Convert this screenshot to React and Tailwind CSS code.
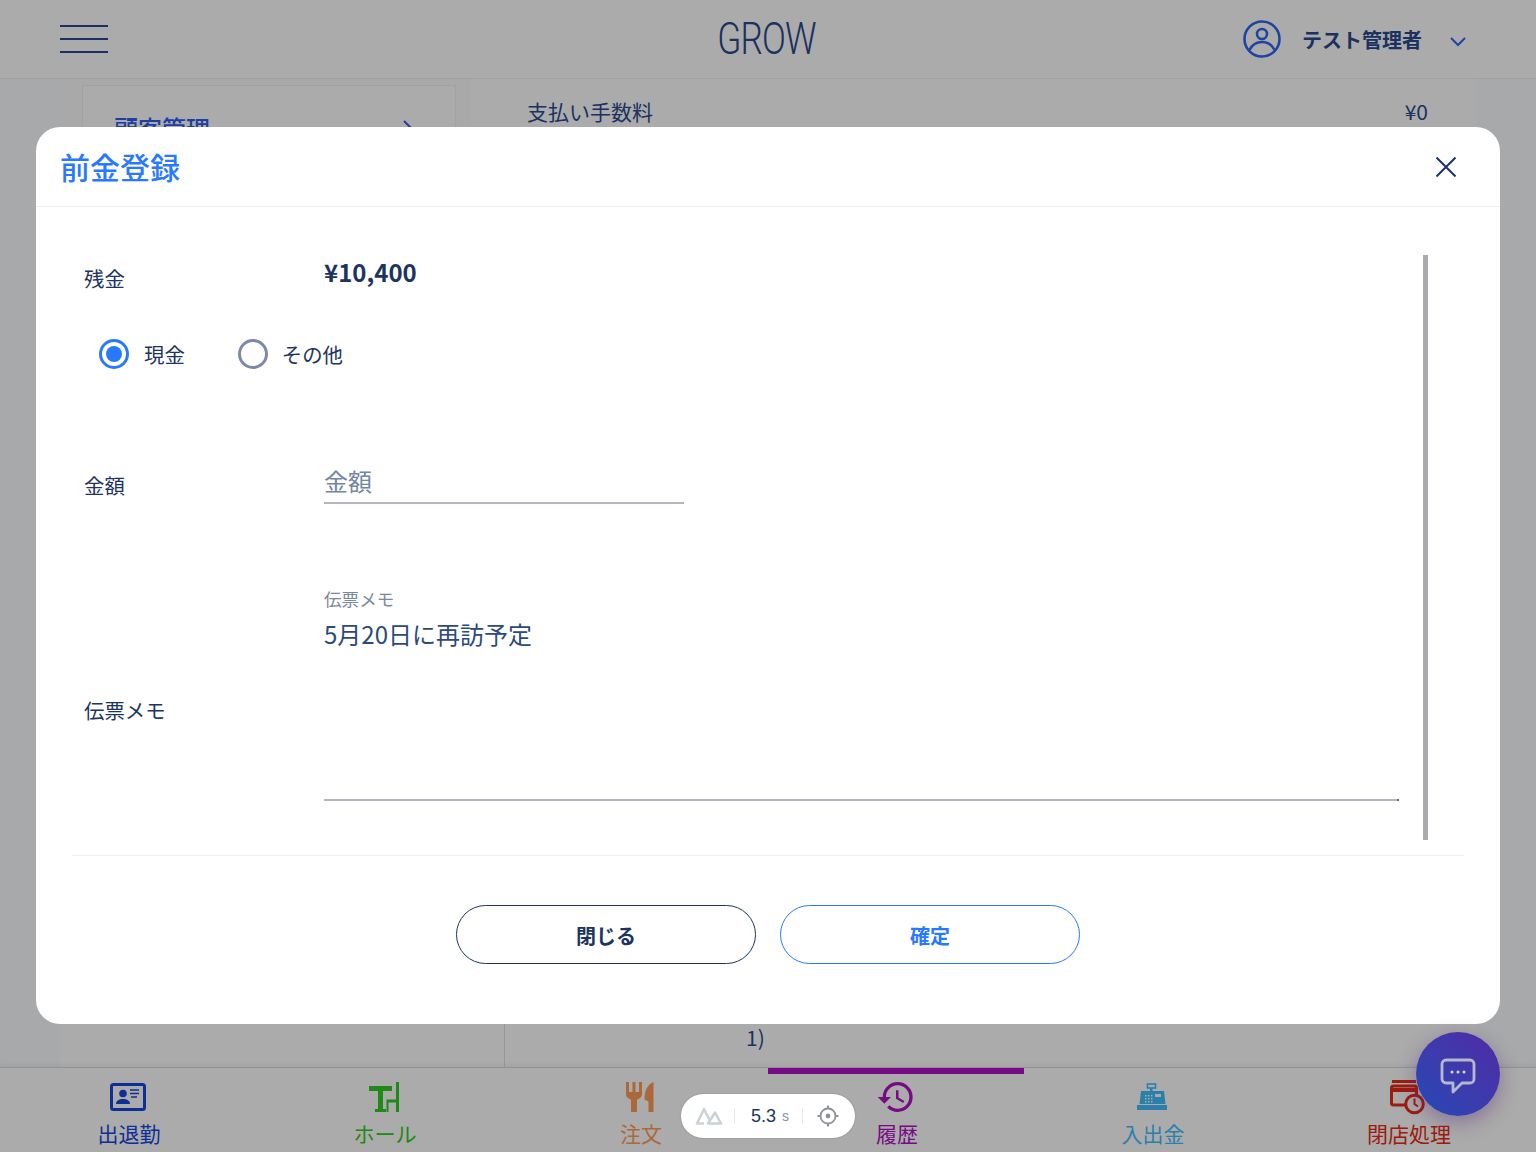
import React from 'react';
import { MdHistory } from 'react-icons/md';

const font = "font-['Noto_Sans_CJK_JP','Noto_Sans',sans-serif]";

function CardIcon() {
  return (
    <svg width="36" height="28" viewBox="0 0 36 28" fill="none">
      <rect x="1.500" y="1.500" width="33" height="25" rx="2" stroke="currentColor" strokeWidth="3" />
      <circle cx="13" cy="10.500" r="3.800" fill="currentColor" />
      <path d="M6 21c0-3.500 3-5 7-5s7 1.500 7 5z" fill="currentColor" />
      <path d="M20 7h9M20 10.500h9M21 14h6" stroke="currentColor" strokeWidth="1.400" />
    </svg>
  );
}
function TableIcon() {
  return (
    <svg width="31" height="30" viewBox="0 0 31 30" fill="currentColor">
      <path d="M0 4h23v5h-9v18h3v3H6v-3h3V9H0z" />
      <path d="M27 0h3v30h-3V20.500H19.500V30H17.500V17.500H27z" />
    </svg>
  );
}
function ForkKnifeIcon() {
  return (
    <svg width="28" height="30" viewBox="0 0 28 30" fill="currentColor">
      <path d="M0 0h3v10h3.500V0h3v10H13V0h3v12c0 3-2.500 5-5 5.500V30H5V17.500C2.500 17 0 15 0 12z" />
      <path d="M27.500 0C22 2 18.500 8 18.500 17.500l4 2V30h5z" />
    </svg>
  );
}
function RegisterIcon() {
  return (
    <svg width="30" height="28" viewBox="0 0 30 28">
      <g fill="currentColor">
        <rect x="0" y="22" width="30" height="5" />
        <path d="M4 8h23l1.500 13H2.500z" />
        <rect x="13" y="5" width="2.500" height="4" />
      </g>
      <rect x="10.500" y="1" width="8" height="4" fill="none" stroke="currentColor" strokeWidth="1.600" />
      <rect x="18" y="11" width="6" height="3" fill="#fff" />
      <g fill="#fff">
        <rect x="8" y="12" width="1.500" height="1.500" /><rect x="11" y="12" width="1.500" height="1.500" /><rect x="14" y="12" width="1.500" height="1.500" />
        <rect x="8" y="15" width="1.500" height="1.500" /><rect x="11" y="15" width="1.500" height="1.500" /><rect x="14" y="15" width="1.500" height="1.500" />
        <rect x="8" y="18" width="1.500" height="1.500" /><rect x="11" y="18" width="1.500" height="1.500" /><rect x="14" y="18" width="1.500" height="1.500" />
      </g>
    </svg>
  );
}
function CloseIcon() {
  return (
    <svg width="36" height="36" viewBox="0 0 36 36" fill="none">
      <rect x="2" y="1" width="24" height="3" fill="currentColor" />
      <rect x="1.500" y="7" width="25" height="19" rx="2" stroke="currentColor" strokeWidth="3" />
      <rect x="1.500" y="9" width="25" height="4" fill="currentColor" />
      <circle cx="24.500" cy="25" r="8.800" fill="#fff" stroke="currentColor" strokeWidth="3" />
      <path d="M24.500 19.500V25l3.500 2.500" stroke="currentColor" strokeWidth="2" />
    </svg>
  );
}

function NavItem({ icon, label, color, active }) {
  return (
    <div className={`relative flex flex-1 flex-col items-center ${color}`}>
      {active && <div className="absolute left-0 right-0 top-0 h-[6px] bg-[#b30fc8]" />}
      <div className="mt-[11px] flex h-[36px] items-center justify-center">{icon}</div>
      <div className="mt-[4px] pl-[2px] text-[21px] leading-[28px]">{label}</div>
    </div>
  );
}

export default function App() {
  return (
    <div className={`relative h-[1152px] w-[1536px] overflow-hidden bg-[#fbfcff] ${font}`}>
      <div className="flex h-full flex-col">
        <header className="flex h-[79px] shrink-0 items-center justify-between border-b border-[#f0f0f0] bg-white pl-[60px] pr-[70px] text-[#2a4a90]">
          <div className="flex w-[48px] flex-col gap-[11px]">
            <div className="h-[2px] bg-[#2a4a90]" />
            <div className="h-[2px] bg-[#2a4a90]" />
            <div className="h-[2px] bg-[#2a4a90]" />
          </div>
          <div className="ml-[182px] origin-center scale-x-[0.8] font-['Roboto'] text-[44px] font-light leading-none tracking-tight">GROW</div>
          <div className="flex items-center">
            <svg width="40" height="40" viewBox="0 0 40 40" fill="none" stroke="#2e66f0" strokeWidth="2.600">
              <circle cx="20" cy="20" r="17.500" />
              <circle cx="20" cy="15" r="5" />
              <path d="M7.500 31c3-6 7.500-8 12.500-8s9.500 2 12.500 8" />
            </svg>
            <div className="ml-[20px] pt-[2px] text-[20px] font-bold">テスト管理者</div>
            <svg className="ml-[28px] mt-[6px]" width="16" height="10" viewBox="0 0 16 10" fill="none" stroke="#2e66f0" strokeWidth="2">
              <path d="M1 1l7 7 7-7" />
            </svg>
          </div>
        </header>

        <main className="mx-[60px] flex min-h-0 flex-1 flex-col bg-white">
          <div className="flex min-h-0 flex-1">
            <div className="w-[410px] shrink-0 bg-[#fdfdfd] pl-[22px] pt-[6px]">
              <div className="flex h-[120px] w-[374px] justify-between border border-[#f2f2f2] bg-white pl-[31px] pr-[40px] pt-[24px] text-[24px] font-medium text-[#2e5ff0]">
                <span>顧客管理</span>
                <svg className="mt-[10px]" width="12" height="22" viewBox="0 0 12 22" fill="none" stroke="currentColor" strokeWidth="2">
                  <path d="M1 1l10 10-10 10" />
                </svg>
              </div>
            </div>
            <div className="flex-1 text-[#2a4a90]">
              <div className="flex justify-between pl-[57px] pr-[48px] pt-[17px] text-[21px] leading-[30px]">
                <span>支払い手数料</span>
                <span>¥0</span>
              </div>
            </div>
          </div>
          <div className="flex h-[43px] shrink-0 text-[#2a4a90]">
            <div className="w-[445px] shrink-0 border-r border-[#dde0e8]" />
            <div className="ml-[241px] text-[21px] leading-[26px]">1)</div>
          </div>
        </main>

        <nav className="flex h-[85px] shrink-0 border-t border-[#d8d9e0] bg-white shadow-[0_-2px_4px_rgba(0,0,0,.05)]">
          <NavItem color="text-[#1746e0]" label="出退勤" icon={<CardIcon />} />
          <NavItem color="text-[#2fce22]" label="ホール" icon={<TableIcon />} />
          <NavItem color="text-[#ff9c58]" label="注文" icon={<ForkKnifeIcon />} />
          <NavItem active color="text-[#b30fc8]" label="履歴" icon={<MdHistory size={40} />} />
          <NavItem color="text-[#3fbfff]" label="入出金" icon={<RegisterIcon />} />
          <NavItem color="text-[#ec2a14]" label="閉店処理" icon={<CloseIcon />} />
        </nav>
      </div>

      {/* overlay */}
      <div className="absolute inset-0 bg-black/[.33]" />

      {/* modal */}
      <div className="absolute left-[36px] top-[127px] flex h-[897px] w-[1464px] flex-col rounded-[24px] bg-white text-[#1d3461]">
        <div className="flex h-[80px] shrink-0 items-center justify-between border-b border-[#eeeeee] pl-[24px] pr-[44px]">
          <div className="pb-[2px] text-[30px] font-medium leading-none text-[#2979ff]">前金登録</div>
          <svg width="20" height="20" viewBox="0 0 20 20" fill="none" stroke="currentColor" strokeWidth="2">
            <path d="M0.500 0.500l19 19M19.500 0.500l-19 19" />
          </svg>
        </div>

        <div className="mx-[36px] flex h-[649px] shrink-0 border-b border-[#eeeeee] pt-[48px]">
          <div className="h-[585px] flex-1 pl-[12px] pr-[24px]">
            <div className="flex h-[52px] items-start">
              <div className="w-[240px] pt-[8px] text-[20.4px] leading-[30px]">残金</div>
              <div className="text-[24px] font-bold leading-[34px]">¥10,400</div>
            </div>
            <div className="mt-[27px] flex h-[40px] items-center pl-[15px] text-[20.4px]">
              <span className="flex h-[30px] w-[30px] items-center justify-center rounded-full border-[3px] border-[#2979ff]">
                <span className="h-[16px] w-[16px] rounded-full bg-[#2979ff]" />
              </span>
              <span className="ml-[15px]">現金</span>
              <span className="ml-[53px] h-[30px] w-[30px] rounded-full border-[3px] border-[#7c8aa8]" />
              <span className="ml-[14px]">その他</span>
            </div>
            <div className="mt-[82px] flex h-[65px] items-start">
              <div className="w-[240px] pt-[14px] text-[20.4px] leading-[30px]">金額</div>
              <div className="h-[48px] w-[360px] border-b-2 border-[#b4b7c0] pt-[8px] text-[24px] leading-[34px] text-[#7285a3]">金額</div>
            </div>
            <div className="mt-[66px] flex items-center">
              <div className="mt-[32px] w-[240px] shrink-0 text-[20.4px] leading-[30px]">伝票メモ</div>
              <div className="relative h-[214px] flex-1 border-b-2 border-[#b4b7c0]">
                <div className="text-[17.6px] leading-[24px] text-[#7b88a0]">伝票メモ</div>
                <div className="mt-[7px] text-[24px] leading-[32px] text-[#2c4a7c]">5月20日に再訪予定</div>
                <div className="absolute bottom-[-2px] right-0 h-[2px] w-[2px] bg-[#666]" />
              </div>
            </div>
          </div>
          <div className="mr-[36px] h-[585px] w-[5px] shrink-0 bg-[#a9abaf]" />
        </div>

        <div className="flex flex-1 justify-center gap-[24px] pt-[49px]">
          <div className="flex h-[59px] w-[300px] items-center justify-center rounded-full border border-[#1d3461] pt-[2px] text-[20px] font-bold">閉じる</div>
          <div className="flex h-[59px] w-[300px] items-center justify-center rounded-full border border-[#2979ff] pt-[2px] text-[20px] font-bold text-[#2979ff]">確定</div>
        </div>
      </div>

      {/* devtools pill */}
      <div className="absolute left-[681px] top-[1094px] flex h-[44px] w-[174px] items-center rounded-full bg-white pl-[14px] font-['Liberation_Sans'] text-[#1d3461] shadow-[0_0_2px_rgba(0,0,0,.2)]">
        <svg width="28" height="18" viewBox="0 0 28 18" fill="none" stroke="#cdd1da" strokeWidth="2.600" strokeLinejoin="round">
          <path d="M9 16.500H2L9 2l6 11.500" />
          <path d="M13 16.500h13L20 5.500z" />
        </svg>
        <div className="ml-[11px] h-[16px] w-px bg-[#e8eaee]" />
        <div className="ml-[16px] text-[18px]">5.3</div>
        <div className="ml-[6px] text-[14px] text-[#8a919e]">s</div>
        <div className="ml-[13px] h-[16px] w-px bg-[#e8eaee]" />
        <svg className="ml-[13px]" width="24" height="24" viewBox="0 0 24 24" fill="none" stroke="#8e939d" strokeWidth="1.800">
          <circle cx="12" cy="12" r="7.500" />
          <circle cx="12" cy="12" r="1.500" fill="#8e939d" />
          <path d="M12 1.500v3M12 19.500v3M1.500 12h3M19.500 12h3" strokeWidth="2.200" />
        </svg>
      </div>

      {/* chat */}
      <div className="absolute left-[1416px] top-[1032px] flex h-[84px] w-[84px] items-center justify-center rounded-full bg-gradient-to-tr from-[#2049b4] to-[#4e29a6] shadow-[0_6px_20px_rgba(80,30,120,.4)]">
        <svg className="mt-[4px]" width="36" height="36" viewBox="0 0 36 36" fill="none" stroke="#b4b9d0" strokeWidth="2.800" strokeLinejoin="round">
          <path d="M6 2h24a4 4 0 0 1 4 4v15a4 4 0 0 1-4 4h-8l-9 9v-9H6a4 4 0 0 1-4-4V6a4 4 0 0 1 4-4z" />
          <circle cx="12" cy="14" r="1.500" fill="#d5d8e6" stroke="none" />
          <circle cx="18" cy="14" r="1.500" fill="#d5d8e6" stroke="none" />
          <circle cx="24" cy="14" r="1.500" fill="#d5d8e6" stroke="none" />
        </svg>
      </div>
    </div>
  );
}
